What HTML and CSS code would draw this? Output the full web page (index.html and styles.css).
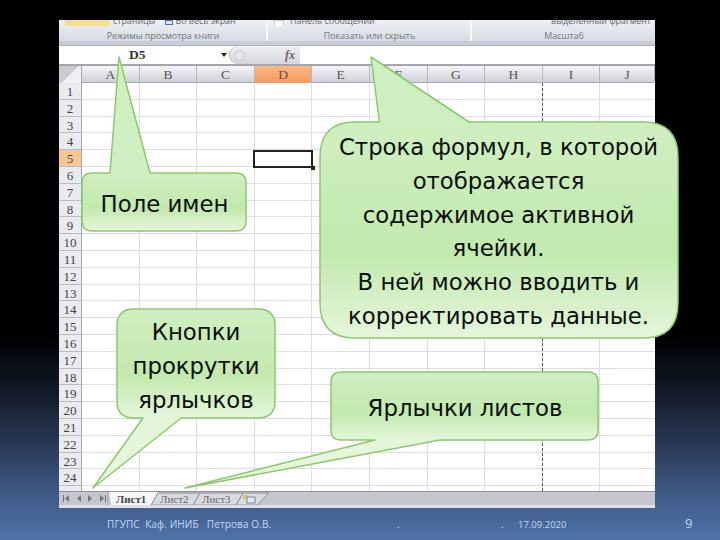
FILE: index.html
```html
<!DOCTYPE html>
<html>
  <head>
    <meta charset="utf-8">
    <title>Строка формул</title>
    <link rel="stylesheet" href="styles.css">
  </head>
  <body>
    <div class="shot">
      <!-- лента -->
      <div class="ribbon">
        <div class="group group-view">
          <div class="group-top">
            <span class="yellow-btn"></span>
            <span class="clip-text">страницы</span>
            <span class="mini-icon"></span>
            <span class="clip-text">Во весь экран</span>
          </div>
          <div class="group-label">Режимы просмотра книги</div>
        </div>
        <div class="group group-show">
          <div class="group-top">
            <span class="checkbox"></span>
            <span class="clip-text">Панель сообщений</span>
          </div>
          <div class="group-label">Показать или скрыть</div>
        </div>
        <div class="group group-zoom">
          <div class="group-top top-right">
            <span class="clip-text">выделенный фрагмент</span>
          </div>
          <div class="group-label">Масштаб</div>
        </div>
      </div>

      <!-- строка формул -->
      <div class="formula-bar">
        <div class="name-box">
          <span class="name-value">D5</span>
          <span class="name-arrow"></span>
        </div>
        <div class="fx-box">
          <span class="fx-knob"></span>
          <span class="fx-text">fx</span>
        </div>
        <div class="formula-input"></div>
      </div>

      <!-- заголовки столбцов -->
      <div class="col-heads">
        <div class="corner"></div>
        <div class="col-head">A</div>
        <div class="col-head">B</div>
        <div class="col-head">C</div>
        <div class="col-head active">D</div>
        <div class="col-head">E</div>
        <div class="col-head">F</div>
        <div class="col-head">G</div>
        <div class="col-head">H</div>
        <div class="col-head">I</div>
        <div class="col-head">J</div>
      </div>

      <!-- лист -->
      <div class="sheet">
        <div class="row-heads">
          <div class="row-head">1</div>
          <div class="row-head">2</div>
          <div class="row-head">3</div>
          <div class="row-head">4</div>
          <div class="row-head active">5</div>
          <div class="row-head">6</div>
          <div class="row-head">7</div>
          <div class="row-head">8</div>
          <div class="row-head">9</div>
          <div class="row-head">10</div>
          <div class="row-head">11</div>
          <div class="row-head">12</div>
          <div class="row-head">13</div>
          <div class="row-head">14</div>
          <div class="row-head">15</div>
          <div class="row-head">16</div>
          <div class="row-head">17</div>
          <div class="row-head">18</div>
          <div class="row-head">19</div>
          <div class="row-head">20</div>
          <div class="row-head">21</div>
          <div class="row-head">22</div>
          <div class="row-head">23</div>
          <div class="row-head">24</div>
        </div>
        <div class="cells">
          <div class="page-break"></div>
          <div class="active-cell"><span class="fill-handle"></span></div>
        </div>
      </div>

      <!-- ярлычки -->
      <div class="tabs">
        <svg class="tabs-svg" width="596" height="13" viewBox="0 0 596 13">
          <g fill="#6f7580">
            <rect x="4" y="3" width="1" height="7"/><path d="M10 3v7l-4-3.500z"/>
            <path d="M22 3v7l-4-3.500z"/>
            <path d="M29 3v7l4-3.500z"/>
            <path d="M41 3v7l4-3.500z"/><rect x="46" y="3" width="1" height="7"/>
          </g>
          <path d="M49 0V13" fill="none" stroke="#a5a8b0"/>
          <path d="M50 0H99L92 13H52z" fill="#f4f5f7"/>
          <path d="M92 13L99 1H141L134 13z" fill="#d8dae0" stroke="#8d9097"/>
          <path d="M134 13L141 1H184L177 13z" fill="#d8dae0" stroke="#8d9097"/>
          <path d="M177 13L184 1H210L198 13z" fill="#d8dae0" stroke="#8d9097"/>
          <rect x="184" y="3" width="5" height="4" fill="#f0c060"/>
          <rect x="188" y="5" width="8" height="6" fill="#e8eaf0" stroke="#6d88a8"/>
          <text class="tab-on" x="57" y="10.500">Лист1</text>
          <text class="tab-off" x="101" y="10.500">Лист2</text>
          <text class="tab-off" x="143" y="10.500">Лист3</text>
        </svg>
        <div class="tabs-strip"></div>
      </div>
    </div>

    <!-- выноски поверх снимка -->
    <svg class="callouts" width="720" height="540" viewBox="0 0 720 540">
      <defs>
        <linearGradient id="green">
          <stop offset="0" stop-color="#d0efc1"/>
          <stop offset="0.6" stop-color="#c2e9ae"/>
          <stop offset="1" stop-color="#e5f6db"/>
        </linearGradient>
        <linearGradient id="fill1" href="#green" gradientUnits="userSpaceOnUse" x1="0" y1="173" x2="0" y2="231"/>
        <linearGradient id="fill2" href="#green" gradientUnits="userSpaceOnUse" x1="0" y1="122" x2="0" y2="338"/>
        <linearGradient id="fill3" href="#green" gradientUnits="userSpaceOnUse" x1="0" y1="309" x2="0" y2="418"/>
        <linearGradient id="fill4" href="#green" gradientUnits="userSpaceOnUse" x1="0" y1="372" x2="0" y2="440"/>
      </defs>

      <path class="bubble" fill="url(#fill1)" d="M92 173H110L119 57L150 173H236Q246 173 246 183V221Q246 231 236 231H92Q82 231 82 221V183Q82 173 92 173Z"/>
      <text class="label" x="164.500" y="212">Поле имен</text>

      <path class="bubble" fill="url(#fill2)" d="M355 122H379.500L371 57L469 122H643Q678 122 678 157V303Q678 338 643 338H355Q320 338 320 303V157Q320 122 355 122Z"/>
      <text class="label" x="498.500" y="155">Строка формул, в которой</text>
      <text class="label" x="498.500" y="189">отображается</text>
      <text class="label" x="498.500" y="223">содержимое активной</text>
      <text class="label" x="498.500" y="256">ячейки.</text>
      <text class="label" x="498.500" y="290">В ней можно вводить и</text>
      <text class="label" x="498.500" y="324">корректировать данные.</text>

      <path class="bubble" fill="url(#fill3)" d="M134 309H258Q275 309 275 326V401Q275 418 258 418H181L93 488L143 418H134Q117 418 117 401V326Q117 309 134 309Z"/>
      <text class="label" x="196" y="340">Кнопки</text>
      <text class="label" x="196" y="374">прокрутки</text>
      <text class="label" x="196" y="408">ярлычков</text>

      <path class="bubble" fill="url(#fill4)" d="M341 372H588Q598 372 598 382V430Q598 440 588 440H440L185 488L375 440H341Q331 440 331 430V382Q331 372 341 372Z"/>
      <text class="label" x="465" y="416">Ярлычки листов</text>
    </svg>

    <div class="footer">
      <span class="foot-author">ПГУПС  Каф. ИНИБ   Петрова О.В.</span>
      <span class="foot-dot-a">.</span>
      <span class="foot-dot-b">.</span>
      <span class="foot-date">17.09.2020</span>
      <span class="foot-num">9</span>
    </div>
  </body>
</html>
```

FILE: styles.css
```css
html, body {
  margin: 0;
  height: 540px;
  overflow: hidden;
}

body {
  position: relative;
  padding-top: 20px;
  box-sizing: border-box;
  width: 720px;
  background: linear-gradient(#000 0, #000 335px, #151f2e 400px, #2c3d5a 450px, #415d8a 500px, #4f72a8 540px);
  font-family: "Open Sans", sans-serif;
}

/* снимок экрана Excel */
.shot {
  width: 596px;
  margin-left: 59px;
  background: #fff;
  font-family: "Liberation Serif", serif;
}

.ribbon {
  display: flex;
  height: 26px;
  padding-bottom: 4px;
  box-sizing: border-box;
  background: #c9cdd4;
  border-bottom: 1px solid #aeb1b7;
}

.group {
  display: flex;
  flex-direction: column;
  justify-content: space-between;
  box-sizing: border-box;
  font-family: "Open Sans", sans-serif;
  font-size: 8.900px;
  color: #737881;
  background: linear-gradient(#eef0f4, #d7dbe3);
  border-right: 2px solid #f7f8fa;
  overflow: hidden;
}

.group-view { width: 209px; }
.group-show { width: 204px; }
.group-zoom { flex: 1; border-right: none; }

.group-top {
  display: flex;
  align-items: flex-start;
  height: 6px;
  overflow: hidden;
  line-height: 9px;
  color: #5f646c;
}

.clip-text { margin-top: -4px; white-space: nowrap; }

.top-right { justify-content: flex-end; padding-right: 4px; }

.yellow-btn {
  width: 45px;
  height: 6px;
  margin: 0 3px 0 6px;
  background: #f7dd94;
}

.mini-icon {
  width: 6px;
  height: 3px;
  margin: 0 2px 0 10px;
  border: 1px solid #4f70b8;
  background: #d8e4f6;
}

.checkbox {
  width: 8px;
  height: 6px;
  margin: 0 6px 0 6px;
  background: #fff;
  border: 1px solid #c9ccd2;
}

.group-label {
  text-align: center;
  line-height: 11px;
  padding-left: 1px;
}

.formula-bar {
  display: flex;
  height: 18px;
  border-bottom: 2px solid #a4a6aa;
  box-sizing: content-box;
}

.name-box {
  display: flex;
  align-items: center;
  width: 170px;
}

.name-value {
  margin-left: 70px;
  font-size: 13.500px;
  font-weight: bold;
  color: #333;
}

.name-arrow {
  margin-left: 75px;
  border: 3px solid transparent;
  border-top: 4px solid #222;
  border-bottom: none;
}

.fx-box {
  display: flex;
  align-items: center;
  justify-content: space-between;
  width: 71px;
  height: 18px;
  box-sizing: border-box;
  padding-right: 5px;
  background: linear-gradient(#eff0f2, #d6d7da);
  border-radius: 9px 0 0 9px;
  border-left: 1px solid #b4b7bc;
}

.fx-knob {
  width: 9px;
  height: 9px;
  margin-left: 4px;
  border-radius: 50%;
  background: #e4e6e9;
  border: 1px solid #c2c5ca;
}

.fx-text {
  font-style: italic;
  font-weight: bold;
  font-size: 12px;
  color: #666;
}

.formula-input { flex: 1; }

.col-heads {
  display: grid;
  grid-template-columns: 23px repeat(9, 57.600px) 1fr;
  height: 17px;
  background: linear-gradient(#f4f5f6, #cfd2d7);
  border-bottom: 1px solid #a5a8ad;
  box-sizing: border-box;
}

.corner {
  background: linear-gradient(135deg, #c9cbd0 50%, #eef0f2 50%);
  border-right: 1px solid #a5a8ad;
}

.col-head {
  border-right: 1px solid #b5b8bd;
  text-align: center;
  font-size: 13.500px;
  line-height: 17px;
  color: #555;
}

.col-head.active { background: linear-gradient(#fbb888, #f49a5c); }

.sheet {
  display: flex;
  height: 408px;
}

.row-heads {
  width: 23px;
  flex: none;
  overflow: hidden;
  background: #e9ebee;
  border-right: 1px solid #a5a8ad;
  box-sizing: border-box;
}

.row-head {
  height: 16.800px;
  box-sizing: border-box;
  border-bottom: 1px solid #b8bbc0;
  text-align: center;
  font-size: 13px;
  line-height: 18px;
  color: #444;
}

.row-head.active { background: #f9c690; }

.cells {
  position: relative;
  flex: 1;
  background-color: #fff;
  background-image:
    repeating-linear-gradient(90deg, transparent 0, transparent 56.600px, #dcdde0 56.600px, #dcdde0 57.600px),
    repeating-linear-gradient(180deg, transparent 0, transparent 15.800px, #dcdde0 15.800px, #dcdde0 16.800px);
}

.page-break {
  position: absolute;
  left: 460px;
  top: 0;
  bottom: 0;
  border-left: 1px dashed #555;
}

.active-cell {
  position: absolute;
  left: 171px;
  top: 67px;
  width: 60px;
  height: 18px;
  box-sizing: border-box;
  border: 2.500px solid #222;
}

.fill-handle {
  position: absolute;
  right: -4px;
  bottom: -4px;
  width: 4px;
  height: 4px;
  background: #222;
}

.tabs {
  background: #c6c6ce;
  border-top: 1px solid #8e9096;
}

.tabs-svg { display: block; }

.tabs-strip {
  height: 3px;
  background: #dfe1e7;
}

.tab-on {
  font: bold 11px "Liberation Serif", serif;
  fill: #444;
}

.tab-off {
  font: 11px "Liberation Serif", serif;
  fill: #666;
}

/* выноски */
.callouts {
  position: absolute;
  left: 0;
  top: 0;
}

.bubble {
  stroke: #8bc96c;
  stroke-width: 1.500;
  stroke-linejoin: round;
}

.label {
  font-family: "DejaVu Sans", sans-serif;
  font-size: 22.800px;
  text-anchor: middle;
  fill: #0a0f0a;
}

/* подвал слайда */
.footer {
  display: flex;
  align-items: baseline;
  height: 20px;
  margin-top: 8px;
  padding-left: 107px;
  font-family: "Open Sans", sans-serif;
  font-size: 10px;
  line-height: 14px;
  color: #c4d6f2;
  white-space: pre;
}

.foot-author { width: 290px; letter-spacing: 0.100px; }
.foot-dot-a { width: 104px; }
.foot-dot-b { width: 17px; }
.foot-date { width: 167px; font-size: 9.500px; }
.foot-num { font-size: 13px; }
```
